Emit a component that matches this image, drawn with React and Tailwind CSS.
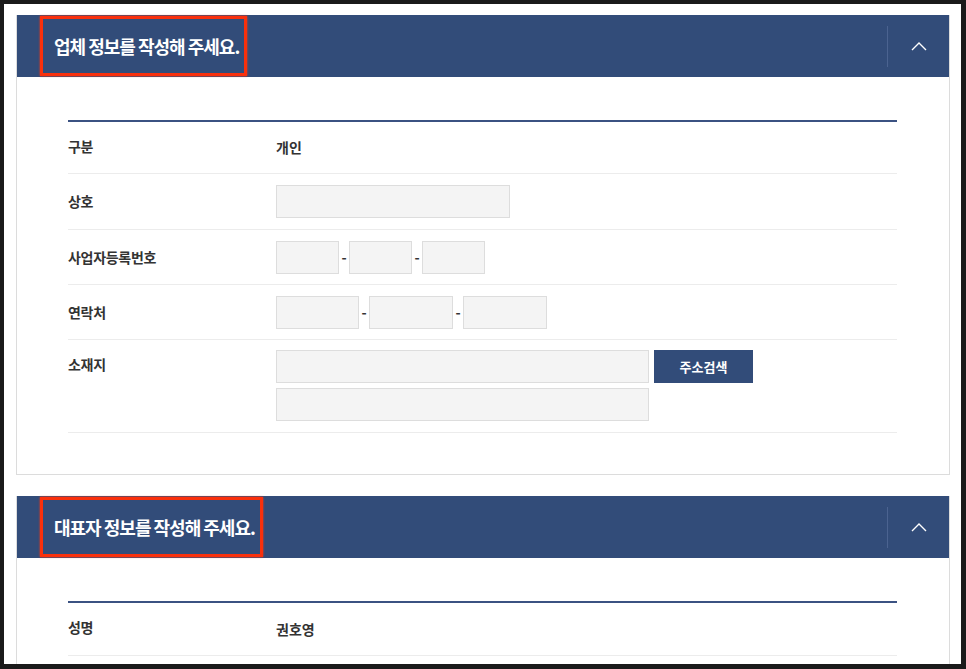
import React from "react";

const font = { fontFamily: '"Noto Sans CJK KR", "Noto Sans", sans-serif' };

function Input({ w }) {
  return <div className={`h-[33px] bg-[#f4f4f4] border border-[#dddddd] ${w}`} />;
}

function Dash() {
  return <span className="w-[10px] text-center text-[14px] font-bold text-[#333]">-</span>;
}

function Header({ title }) {
  return (
    <div className="flex h-[62px] items-center bg-[#324c79] pl-[23px]">
      <div className="flex h-[60px] items-center border-[3px] border-[#f9300c] pl-[11px] pr-[5px] shadow-[0_0_2px_#ff3a10]">
        <span className="text-[18px] font-bold tracking-[-1px] text-white">{title}</span>
      </div>
      <div className="flex-1" />
      <div className="h-[41px] w-px bg-[#4b6390]" />
      <div className="flex w-[61px] items-center justify-center">
        <svg width="16" height="9" viewBox="0 0 16 9" fill="none">
          <path d="M1 8 L8 1 L15 8" stroke="white" strokeWidth="1.4" />
        </svg>
      </div>
    </div>
  );
}

function Row({ label, children, h = "h-[55px]", top = false, text = false }) {
  return (
    <div className={`flex border-b border-[#ececec] ${top ? "items-start pt-[10px] pb-[11px]" : `items-center ${h}`}`}>
      <div className={`w-[208px] text-[14px] font-bold tracking-[-0.3px] text-[#333] ${top ? "pt-[4px]" : ""} ${text ? "pb-[3px]" : ""}`}>{label}</div>
      <div className={`flex-1 ${text ? "pb-[3px]" : ""}`}>{children}</div>
    </div>
  );
}

export default function App() {
  return (
    <div style={font} className="w-[966px] h-[669px] bg-[#1a1a1a] pt-[4px] pl-[4px] pr-[5px] pb-[5px]">
      <div className="h-full w-full overflow-hidden bg-white pt-[11px] pl-[12px] pr-[11px]">
        <div className="border border-t-0 border-[#dcdcdc]">
          <Header title="업체 정보를 작성해 주세요." />
          <div className="pl-[51px] pr-[52px] pt-[43px] pb-[41px]">
            <div className="border-t-2 border-[#3b5282]">
              <Row label="구분" h="h-[52px]" text>
                <span className="text-[14px] font-bold text-[#333]">개인</span>
              </Row>
              <Row label="상호" h="h-[56px]">
                <Input w="w-[234px]" />
              </Row>
              <Row label="사업자등록번호">
                <div className="flex items-center">
                  <Input w="w-[63px]" />
                  <Dash />
                  <Input w="w-[63px]" />
                  <Dash />
                  <Input w="w-[63px]" />
                </div>
              </Row>
              <Row label="연락처">
                <div className="flex items-center">
                  <Input w="w-[83px]" />
                  <Dash />
                  <Input w="w-[84px]" />
                  <Dash />
                  <Input w="w-[84px]" />
                </div>
              </Row>
              <Row label="소재지" top>
                <div className="flex flex-col gap-[5px]">
                  <div className="flex items-center gap-[5px]">
                    <Input w="w-[373px]" />
                    <button className="h-[33px] w-[99px] bg-[#324c79] text-[13px] font-bold text-white">
                      주소검색
                    </button>
                  </div>
                  <Input w="w-[373px]" />
                </div>
              </Row>
            </div>
          </div>
        </div>

        <div className="mt-[21px] border border-t-0 border-[#dcdcdc]">
          <Header title="대표자 정보를 작성해 주세요." />
          <div className="pl-[51px] pr-[52px] pt-[43px] pb-[41px]">
            <div className="border-t-2 border-[#3b5282]">
              <Row label="성명" h="h-[53px]" text>
                <span className="text-[14px] font-bold text-[#333]">권호영</span>
              </Row>
            </div>
          </div>
        </div>
      </div>
    </div>
  );
}
